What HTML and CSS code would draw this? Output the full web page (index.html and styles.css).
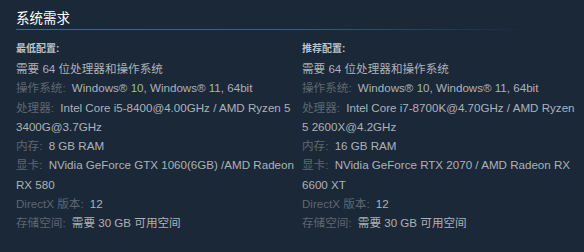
FILE: index.html
```html
<!DOCTYPE html>
<html lang="zh-CN">
<head>
<meta charset="utf-8">
<link rel="stylesheet" href="styles.css">
</head>
<body>
<div class="sysreq">
  <h2 class="title">系统需求</h2>
  <div class="cols">
    <div class="col">
      <div class="head">最低配置:</div>
      <ul>
        <li>需要 64 位处理器和操作系统</li>
        <li><span class="lbl">操作系统:</span> Windows® 10, Windows® 11, 64bit</li>
        <li><span class="lbl">处理器:</span> Intel Core i5-8400@4.00GHz / AMD Ryzen 5 3400G@3.7GHz</li>
        <li><span class="lbl">内存:</span> 8 GB RAM</li>
        <li><span class="lbl">显卡:</span> NVidia GeForce GTX 1060(6GB) /AMD Radeon RX 580</li>
        <li><span class="lbl">DirectX 版本:</span> 12</li>
        <li><span class="lbl">存储空间:</span> 需要 30 GB 可用空间</li>
      </ul>
    </div>
    <div class="col">
      <div class="head">推荐配置:</div>
      <ul>
        <li>需要 64 位处理器和操作系统</li>
        <li><span class="lbl">操作系统:</span> Windows® 10, Windows® 11, 64bit</li>
        <li><span class="lbl">处理器:</span> Intel Core i7-8700K@4.70GHz / AMD Ryzen 5 2600X@4.2GHz</li>
        <li><span class="lbl">内存:</span> 16 GB RAM</li>
        <li><span class="lbl">显卡:</span> NVidia GeForce RTX 2070 / AMD Radeon RX 6600 XT</li>
        <li><span class="lbl">DirectX 版本:</span> 12</li>
        <li><span class="lbl">存储空间:</span> 需要 30 GB 可用空间</li>
      </ul>
    </div>
  </div>
</div>
</body>
</html>
```

FILE: styles.css
```css
html, body {
  margin: 0;
  padding: 0;
  background: #1b2838;
  height: 100%;
}
body {
  font-family: "Liberation Sans", "Noto Sans CJK SC", sans-serif;
  color: #acb2b8;
}
.sysreq {
  padding: 8px 0 0 16px;
}
.title {
  margin: 0;
  font-size: 13.5px;
  font-weight: normal;
  color: #ffffff;
  line-height: 21px;
  padding-bottom: 1px;
  width: 511px;
}
.title::after {
  content: "";
  display: block;
  height: 1px;
  background: linear-gradient(to right, #3d6b89 0%, #37607c 55%, rgba(55,96,124,0) 100%);
}
.cols {
  display: grid;
  grid-template-columns: 282px 273px;
  column-gap: 4px;
  margin-top: 11px;
}
.head {
  font-size: 10px;
  line-height: 13px;
  font-weight: bold;
  color: #b9c4cc;
  margin-bottom: 4px;
}
ul {
  list-style: none;
  margin: 0;
  padding: 0;
}
li {
  font-size: 11.6px;
  line-height: 19.3px;
  color: #acb2b8;
}
.lbl {
  color: #5f6770;
  margin-right: 3px;
}
```
